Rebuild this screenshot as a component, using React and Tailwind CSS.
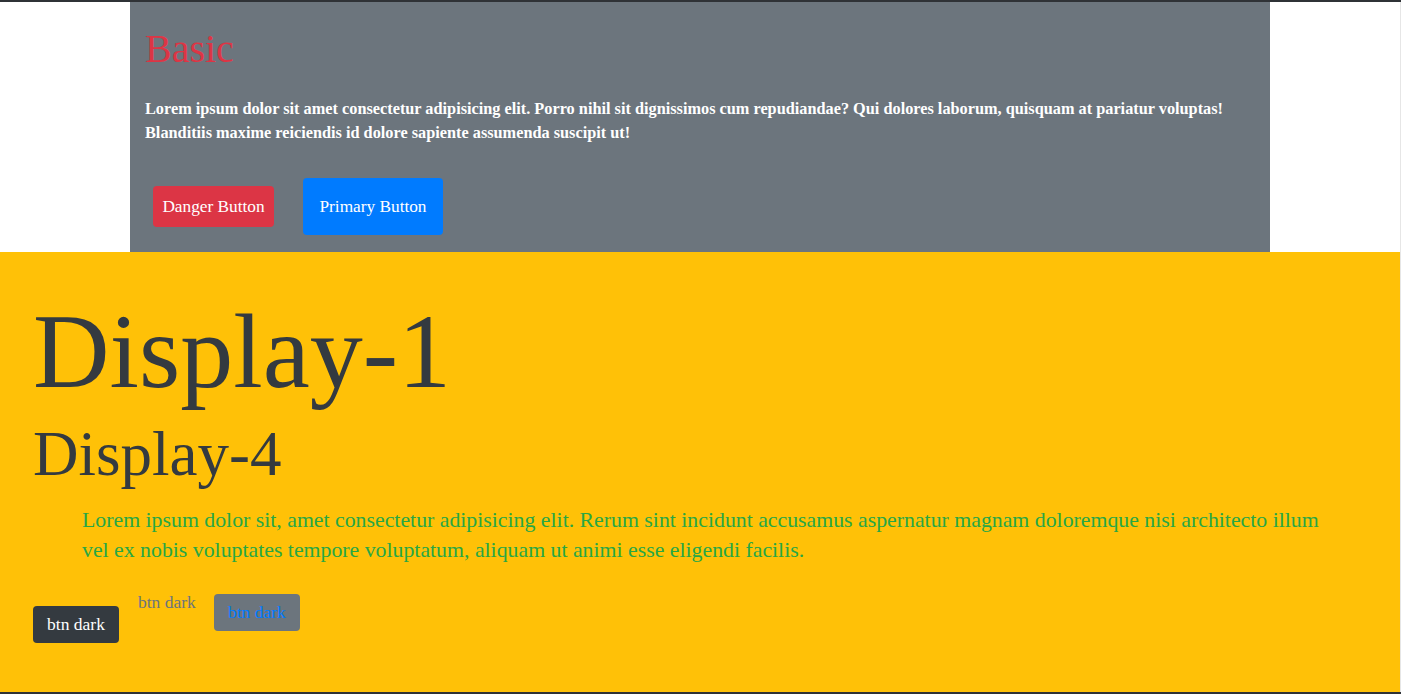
export default function App() {
  return (
    <div className="w-[1401px] h-[694px] overflow-hidden bg-white border-t-2 border-b-2 border-[#2f3236] flex font-['Liberation_Serif',serif]">
      <div className="w-[1400px] flex flex-col">
        <div className="w-[1140px] h-[250px] ml-[130px] bg-[#6c757d] px-[15px] pt-[23px] flex flex-col">
          <h1 className="text-[40px] leading-[48px] text-[#dc3545] mb-[24px]">Basic</h1>
          <p className="text-[16.3px] leading-[24px] font-bold text-white whitespace-nowrap">
            <span className="block">Lorem ipsum dolor sit amet consectetur adipisicing elit. Porro nihil sit dignissimos cum repudiandae? Qui dolores laborum, quisquam at pariatur voluptas!</span>
            <span className="block">Blanditiis maxime reiciendis id dolore sapiente assumenda suscipit ut!</span>
          </p>
          <div className="flex items-center mt-[33px]">
            <button className="ml-[8px] w-[121px] h-[41px] rounded-[4px] bg-[#dc3545] text-white text-[17.3px] flex items-center justify-center">Danger Button</button>
            <button className="ml-[29px] w-[140px] h-[57px] rounded-[4px] bg-[#007bff] text-white text-[17.3px] flex items-center justify-center">Primary Button</button>
          </div>
        </div>
        <div className="h-[440px] bg-[#ffc107] pl-[33px] pt-[42px] flex flex-col text-[#343a40]">
          <h1 className="text-[106px] leading-[115px] font-light">Display-1</h1>
          <h2 className="text-[63px] leading-[67px] font-light mt-[12px]">Display-4</h2>
          <p className="ml-[49px] mt-[17px] text-[21.8px] leading-[30px] text-[#28a745] whitespace-nowrap">
            <span className="block">Lorem ipsum dolor sit, amet consectetur adipisicing elit. Rerum sint incidunt accusamus aspernatur magnam doloremque nisi architecto illum</span>
            <span className="block">vel ex nobis voluptates tempore voluptatum, aliquam ut animi esse eligendi facilis.</span>
          </p>
          <div className="flex items-start mt-[29px]">
            <button className="mt-[12px] w-[86px] h-[37px] rounded-[4px] bg-[#343a40] text-white text-[17.5px] flex items-center justify-center">btn dark</button>
            <span className="ml-[19px] -mt-[4px] text-[17.5px] leading-[24px] text-[#6c757d]">btn dark</span>
            <button className="ml-[18px] w-[86px] h-[37px] rounded-[4px] bg-[#6c757d] text-[#007bff] text-[17.5px] flex items-center justify-center">btn dark</button>
          </div>
        </div>
      </div>
      <div className="w-px bg-[#e6e6e6]" />
    </div>
  );
}
